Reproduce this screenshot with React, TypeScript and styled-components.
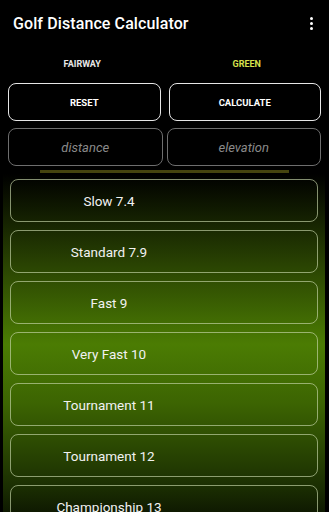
import React from 'react'
import styled, { createGlobalStyle } from 'styled-components'

const GlobalStyle = createGlobalStyle`
  html, body {
    margin: 0;
    padding: 0;
    background: #000;
  }
  body {
    font-family: Roboto, "Liberation Sans", sans-serif;
    color: #fff;
    overflow: hidden;
  }
`

const SPage = styled.div`
  width: 329px;
  height: 512px;
  overflow: hidden;
  background: #000;
  display: flex;
  flex-direction: column;

  & > * {
    flex-shrink: 0;
  }
`

const SHeader = styled.header`
  height: 46px;
  display: flex;
  align-items: center;
  justify-content: space-between;
  padding: 0 12px 0 13px;
`

const STitle = styled.h1`
  margin: 0;
  font-size: 16px;
  font-weight: 500;
  letter-spacing: 0.1px;
`

const SMenu = styled.div`
  display: flex;
  flex-direction: column;
  gap: 2px;
  padding: 4px;

  span {
    width: 3px;
    height: 3px;
    border-radius: 50%;
    background: #fff;
  }
`

const STabs = styled.div`
  display: grid;
  grid-template-columns: 1fr 1fr;
  height: 36px;
  align-items: center;
`

const STab = styled.div<{ $active?: boolean }>`
  text-align: center;
  font-size: 9px;
  font-weight: 700;
  color: ${(p) => (p.$active ? '#d7e24c' : '#e8e8e8')};
`

const SRow = styled.div<{ $gap: number; $top: number }>`
  display: grid;
  grid-template-columns: 1fr 1fr;
  gap: ${(p) => p.$gap}px;
  padding: 0 8px;
  margin-top: ${(p) => p.$top}px;
`

const SButton = styled.button`
  height: 38px;
  background: #000;
  border: 1.5px solid #e6e6e6;
  border-radius: 8px;
  color: #fff;
  font-family: Roboto, "Liberation Sans", sans-serif;
  font-size: 9.5px;
  font-weight: 700;
`

const SInput = styled.input`
  height: 38px;
  box-sizing: border-box;
  width: 100%;
  background: #000;
  border: 1px solid #6e6e6e;
  border-radius: 8px;
  color: #fff;
  text-align: center;
  font-family: Roboto, "Liberation Sans", sans-serif;
  font-size: 13px;
  font-style: italic;

  &::placeholder {
    color: #8a8a8a;
  }
`

const SDivider = styled.div`
  height: 3px;
  margin: 4px 40px 1px;
  background: #45440f;
`

const SList = styled.div`
  margin: 0 4px 0 3px;
  padding: 5px 7px;
  height: 360px;
  display: flex;
  flex-direction: column;
  gap: 8px;
  background: linear-gradient(180deg, #000 0%, #2a4402 25%, #4b7c03 46%, #3c6402 62%, #1a2d02 85%, #000 100%);
`

const SItem = styled.div`
  flex: 0 0 43px;
  box-sizing: border-box;
  border: 1px solid rgba(200, 215, 170, 0.65);
  border-radius: 8px;
  display: flex;
  align-items: center;
`

const SItemLabel = styled.span`
  width: 196px;
  text-align: center;
  font-size: 13.5px;
  color: #f2f2f2;
`

const speeds = [
  'Slow 7.4',
  'Standard 7.9',
  'Fast 9',
  'Very Fast 10',
  'Tournament 11',
  'Tournament 12',
  'Championship 13',
]

const App: React.FC = () => {
  return (
    <SPage>
      <GlobalStyle />
      <SHeader>
        <STitle>Golf Distance Calculator</STitle>
        <SMenu>
          <span />
          <span />
          <span />
        </SMenu>
      </SHeader>
      <STabs>
        <STab>FAIRWAY</STab>
        <STab $active>GREEN</STab>
      </STabs>
      <SRow $gap={8} $top={1}>
        <SButton>RESET</SButton>
        <SButton>CALCULATE</SButton>
      </SRow>
      <SRow $gap={4} $top={7}>
        <SInput placeholder="distance" />
        <SInput placeholder="elevation" />
      </SRow>
      <SDivider />
      <SList>
        {speeds.map((s) => (
          <SItem key={s}>
            <SItemLabel>{s}</SItemLabel>
          </SItem>
        ))}
      </SList>
    </SPage>
  )
}

export default App
